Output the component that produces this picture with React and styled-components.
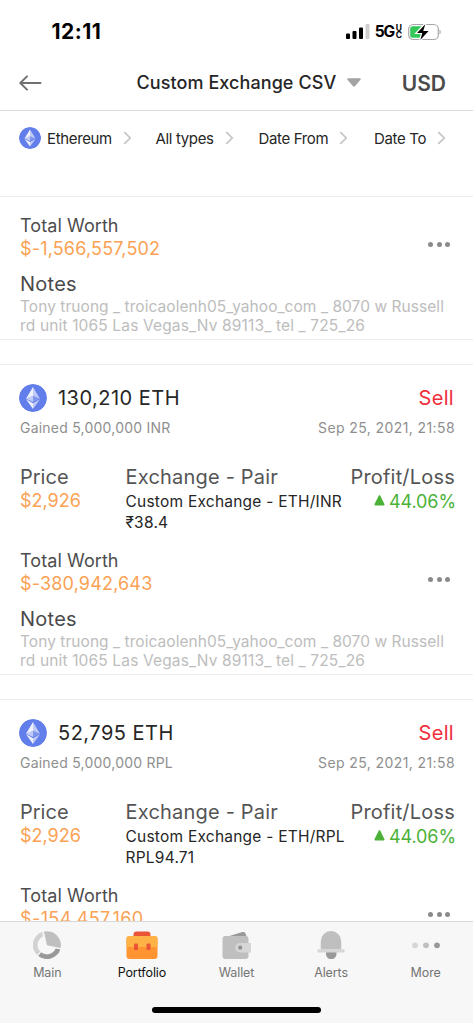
import React from "react";
import styled, { createGlobalStyle } from "styled-components";

const NOTE = "Tony truong _ troicaolenh05_yahoo_com _ 8070 w Russell rd unit 1065 Las Vegas_Nv 89113_ tel _ 725_26"

const filters = [
    { id: 1, name: "Ethereum", icon: true, width: 136.5 },
    { id: 2, name: "All types", width: 103 },
    { id: 3, name: "Date From", width: 115.5 },
    { id: 4, name: "Date To", width: 80 },
]

const trades = [
    { id: 1, amount: "130,210 ETH", gained: "Gained 5,000,000 INR", pair: "Custom Exchange - ETH/INR", rate: "₹38.4", worth: "$-380,942,643" },
    { id: 2, amount: "52,795 ETH", gained: "Gained 5,000,000 RPL", pair: "Custom Exchange - ETH/RPL", rate: "RPL94.71", worth: "$-154,457,160", spacing: 0.4 },
]

export default function App() {
    return (<Screen>
        <GlobalStyle />
        <StatusBar />
        <Header>
            <BackArrow />
            <Title>Custom Exchange CSV</Title>
            <Caret width="14" height="9" viewBox="0 0 14 9"><path d="M1.2.3h11.600c.9 0 1.200.8.7 1.400L8.200 7.900c-.7.8-1.700.8-2.400 0L.5 1.700C0 1.100.3.3 1.200.3z" fill="#a3a3a3" /></Caret>
            <Currency>USD</Currency>
        </Header>
        <Filters>
            {filters.map((f) => <Filter key={f.id} $width={f.width}>
                {f.icon && <EthIcon size={22} />}
                <FilterName $icon={f.icon}>{f.name}</FilterName>
                <Chevron />
            </Filter>)}
        </Filters>
        <List>
            <Card $cut>
                <Worth value="$-1,566,557,502" />
                <Notes />
            </Card>
            {trades.map((t) => <Trade key={t.id} {...t} />)}
        </List>
        <TabBar />
    </Screen>)
}

function StatusBar() {
    return (<StyleStatus>
        <Clock>12:11</Clock>
        <Signals>
            <svg width="24" height="16" viewBox="0 0 24 16">
                <rect x="0" y="9.500" width="4" height="5.500" rx="1" fill="#000" />
                <rect x="6.500" y="7" width="4" height="8" rx="1" fill="#000" />
                <rect x="13" y="3.500" width="4" height="11.500" rx="1" fill="#000" />
                <rect x="19.500" y="0" width="4" height="15" rx="1" fill="#cfcfcf" />
            </svg>
            <Network>5G</Network>
            <Stack><span>U</span><span>C</span></Stack>
            <svg width="34" height="18" viewBox="0 0 34 18">
                <rect x="0.700" y="1.500" width="29.600" height="15" rx="4.600" fill="#fff" stroke="#a8a8a8" strokeWidth="1.200" />
                <path d="M4.700 3.200H14v11.600H4.700a2.500 2.500 0 0 1-2.500-2.500V5.700a2.500 2.500 0 0 1 2.500-2.500z" fill="#34c759" />
                <path d="M31.500 6.500c1.600.7 1.600 4.300 0 5z" fill="#a8a8a8" />
                <path d="M17.300 1.200L9 9.900h5.300l-2 7L20.600 8h-5.400z" fill="#000" stroke="#fff" strokeWidth="2.400" />
                <path d="M17.300 1.200L9 9.900h5.300l-2 7L20.600 8h-5.400z" fill="#000" />
            </svg>
        </Signals>
    </StyleStatus>)
}

function BackArrow() {
    return (<svg width="23" height="16" viewBox="0 0 23 16" fill="none" stroke="#707070" strokeWidth="1.900" strokeLinecap="round" strokeLinejoin="round">
        <path d="M21.500 8H1.500M8 1.300L1.300 8 8 14.700" />
    </svg>)
}

function Chevron() {
    return (<svg width="9" height="14" viewBox="0 0 9 14" fill="none" stroke="#c4c4c4" strokeWidth="1.700">
        <path d="M1.300 1.200L7.200 7l-5.900 5.800" />
    </svg>)
}

function EthIcon({ size }) {
    return (<Coin width={size} height={size} viewBox="0 0 32 32">
        <circle cx="16" cy="16" r="16" fill="#627eea" />
        <path d="M16 3.500v9.900l8 3.500z" fill="#fff" fillOpacity=".6" />
        <path d="M16 3.500l-8 13.400 8-3.500z" fill="#fff" fillOpacity=".9" />
        <path d="M16 21.900v6.600l8-11.100z" fill="#fff" fillOpacity=".6" />
        <path d="M16 28.500v-6.600l-8-4.500z" fill="#fff" fillOpacity=".9" />
        <path d="M16 20.500l8-3.600-8-3.500z" fill="#fff" fillOpacity=".2" />
        <path d="M8 16.900l8 3.600v-7.100z" fill="#fff" fillOpacity=".6" />
    </Coin>)
}

function Worth({ value, spacing }) {
    return (<WorthRow>
        <div>
            <WorthLabel>Total Worth</WorthLabel>
            <Money $spacing={spacing}>{value}</Money>
        </div>
        <Dots><i /><i /><i /></Dots>
    </WorthRow>)
}

function Notes() {
    return (<>
        <NotesLabel>Notes</NotesLabel>
        <NotesText>{NOTE}</NotesText>
    </>)
}

function Trade({ amount, gained, pair, rate, worth, spacing }) {
    return (<Card>
        <TopRow>
            <EthIcon size={28} />
            <Amount>{amount}</Amount>
            <Sell>Sell</Sell>
        </TopRow>
        <SubRow>
            <Gained>{gained}</Gained>
            <span>Sep 25, 2021, 21:58</span>
        </SubRow>
        <Columns>
            <div>
                <Label $spacing={0}>Price</Label>
                <Money $spacing={0}>$2,926</Money>
            </div>
            <div>
                <Label>Exchange - Pair</Label>
                <Pair>{pair}<br />{rate}</Pair>
            </div>
            <Right>
                <Label>Profit/Loss</Label>
                <Profit>
                    <Triangle width="11" height="11" viewBox="0 0 11 11"><path d="M4.700.8c.3-.6 1.300-.6 1.600 0l4.100 8.300c.3.7 0 1.400-.8 1.400H1.400c-.8 0-1.100-.7-.8-1.400z" fill="#4bb237" /></Triangle>
                    <span>44.06%</span>
                </Profit>
            </Right>
        </Columns>
        <Worth value={worth} spacing={spacing} />
        <Notes />
    </Card>)
}

function TabBar() {
    return (<StyleTabs>
        <Tabs>
            <Tab>
                <svg width="28" height="28" viewBox="0 0 28 28">
                    <path d="M10.900.5A14 14 0 0 1 27.600 17L14 14.200z" fill="#bfbfbf" />
                    <path d="M9.300.8A14 14 0 0 0 4 24l3.300-3.500A9.300 9.300 0 0 1 10 5.500z" fill="#d2d2d2" />
                    <path d="M27.300 18.400A14 14 0 0 1 5.200 25l3-3.800a9.300 9.300 0 0 0 14.400-3.800z" fill="#999" />
                </svg>
                <TabName>Main</TabName>
            </Tab>
            <Tab>
                <svg width="32" height="28" viewBox="0 0 32 28">
                    <path d="M7.500 6V3.500A3 3 0 0 1 10.500.5h11a3 3 0 0 1 3 3V6z" fill="#ea5437" />
                    <rect x="0.500" y="5" width="31" height="23" rx="3" fill="#ff9431" />
                    <path d="M.5 16V8a3 3 0 0 1 3-3h25a3 3 0 0 1 3 3v8z" fill="#ffb347" />
                    <rect x="8" y="12.500" width="4" height="6.500" rx=".8" fill="#ea5437" />
                    <rect x="20.500" y="12.500" width="4" height="6.500" rx=".8" fill="#ea5437" />
                </svg>
                <TabName $active>Portfolio</TabName>
            </Tab>
            <Tab>
                <svg width="30" height="28" viewBox="0 0 30 28">
                    <path d="M3.500 6.500L20.500 1.200c2-.6 3.500-.2 4.200 1.700L26 7z" fill="#999" />
                    <rect x="1.500" y="5" width="26" height="23" rx="3" fill="#bfbfbf" />
                    <path d="M19 12H30v9.500H19a4.700 4.700 0 0 1 0-9.500z" fill="#d6d6d6" />
                    <circle cx="19.200" cy="16.700" r="2.100" fill="#919191" />
                </svg>
                <TabName>Wallet</TabName>
            </Tab>
            <Tab>
                <svg width="28" height="28" viewBox="0 0 28 28">
                    <path d="M9 20.500h10.500V23a5.200 5.200 0 0 1-10.500 0z" fill="#999" />
                    <path d="M3.800 18.500V10.300a10.200 10.200 0 0 1 20.400 0v8.200z" fill="#bfbfbf" />
                    <rect x="0.500" y="18.300" width="27" height="3.200" fill="#d6d6d6" />
                </svg>
                <TabName>Alerts</TabName>
            </Tab>
            <Tab>
                <svg width="30" height="28" viewBox="0 0 30 28">
                    <circle cx="4" cy="14.300" r="2.900" fill="#d6d6d6" />
                    <circle cx="15" cy="14.300" r="2.900" fill="#bfbfbf" />
                    <circle cx="26" cy="14.300" r="2.900" fill="#999" />
                </svg>
                <TabName>More</TabName>
            </Tab>
        </Tabs>
        <HomeBar />
    </StyleTabs>)
}

const GlobalStyle = createGlobalStyle`
*{
    box-sizing:border-box;
}
body{
    margin:0;
    background-color:#fff;
    font-family:Inter, "Liberation Sans", sans-serif;
}
svg{
    display:block;
    flex-shrink:0;
}
`
const Screen = styled.main`
width:473px;
height:1023px;
display:flex;
flex-direction:column;
overflow:hidden;
background-color:#fff;
`
const StyleStatus = styled.div`
height:56px;
flex-shrink:0;
display:flex;
justify-content:space-between;
padding:20px 31px 0 51.5px;
`
const Clock = styled.span`
height:23px;
line-height:23px;
font-size:21px;
font-weight:700;
letter-spacing:0.5px;
color:#000;
`
const Signals = styled.div`
height:23px;
display:flex;
align-items:center;
`
const Network = styled.span`
margin-left:5px;
font-size:15.5px;
font-weight:700;
letter-spacing:-1px;
`
const Stack = styled.span`
display:flex;
flex-direction:column;
margin:0 6px 0 1.5px;
font-size:8.5px;
line-height:7px;
font-weight:700;
`
const Header = styled.header`
height:55px;
flex-shrink:0;
display:flex;
align-items:center;
padding:0 27px 0 19px;
border-bottom:1px solid #d9d9d9;
`
const Title = styled.h1`
margin:0 0 0 94.5px;
padding-bottom:1px;
font-size:18px;
font-weight:500;
letter-spacing:0.08px;
color:#262626;
white-space:nowrap;
`
const Caret = styled.svg`
margin:0 0 2px 11px;
`
const Currency = styled.span`
margin-left:auto;
padding-top:1px;
font-size:21px;
font-weight:600;
color:#4a4a4a;
`
const Filters = styled.nav`
height:85px;
flex-shrink:0;
display:flex;
align-items:flex-start;
padding:16px 0 0 19px;
`
const Filter = styled.div`
width:${(props) => props.$width}px;
height:22px;
display:flex;
align-items:center;
`
const FilterName = styled.span`
margin-left:${(props) => props.$icon ? "6px" : "0"};
margin-right:11px;
font-size:15px;
letter-spacing:-0.35px;
color:#262626;
white-space:nowrap;
`
const Coin = styled.svg`
border-radius:50%;
`
const List = styled.section`
flex:1;
min-height:0;
overflow:hidden;
`
const Card = styled.article`
height:${(props) => props.$cut ? "144px" : "311px"};
margin-bottom:24px;
padding:${(props) => props.$cut ? "1px" : "15px"} 19px 0 20px;
border-top:1px solid #ececec;
border-bottom:1px solid #ececec;
`
const TopRow = styled.div`
height:35px;
margin-left:-1.5px;
display:flex;
align-items:center;
`
const Amount = styled.span`
margin-left:11.5px;
font-size:20px;
letter-spacing:0.48px;
color:#262626;
`
const Sell = styled.span`
margin-left:auto;
font-size:20px;
letter-spacing:0.3px;
color:#f02f3c;
`
const SubRow = styled.div`
height:24px;
margin-right:-1px;
display:flex;
justify-content:space-between;
align-items:center;
font-size:14px;
letter-spacing:0.4px;
color:#8f8f8f;
`
const Gained = styled.span`
letter-spacing:0.22px;
`
const Columns = styled.div`
display:grid;
grid-template-columns:105.5px 1fr auto;
height:68px;
margin-top:26px;
margin-right:-1px;
`
const Right = styled.div`
text-align:right;
`
const Label = styled.h4`
margin:0;
height:24px;
line-height:24px;
font-size:20px;
font-weight:400;
letter-spacing:${(props) => props.$spacing ?? 0.2}px;
color:#555;
white-space:nowrap;
`
const Money = styled.p`
margin:0;
height:24px;
line-height:24px;
font-size:18px;
letter-spacing:${(props) => props.$spacing ?? 0.17}px;
color:#fba254;
`
const Pair = styled.p`
margin:2px -20px 0 0;
font-size:15.5px;
line-height:21px;
letter-spacing:0.23px;
color:#262626;
white-space:nowrap;
`
const Profit = styled.div`
height:24px;
margin-right:-1px;
display:flex;
align-items:center;
justify-content:flex-end;
gap:4px;
font-size:18px;
letter-spacing:-0.1px;
color:#4bb237;
`
const Triangle = styled.svg`
margin-bottom:2px;
`
const WorthRow = styled.div`
display:flex;
justify-content:space-between;
margin-top:15px;
height:59px;
`
const WorthLabel = styled.h4`
margin:0;
height:24px;
line-height:25px;
font-size:18px;
font-weight:400;
letter-spacing:0.08px;
color:#4d4d4d;
`
const Dots = styled.div`
display:flex;
gap:3.5px;
padding:29px 4px 0 0;
i{
    width:5px;
    height:5px;
    border-radius:50%;
    background-color:#8a8a8a;
}
`
const NotesLabel = styled.h4`
margin:0;
height:24px;
line-height:24px;
font-size:20px;
font-weight:400;
letter-spacing:0.25px;
color:#4a4a4a;
`
const NotesText = styled.p`
margin:2px 0 0;
width:436px;
font-size:15.5px;
line-height:18.5px;
letter-spacing:0.15px;
color:#bdbdbd;
&::first-line{
    letter-spacing:0.05px;
}
`
const StyleTabs = styled.footer`
height:102px;
flex-shrink:0;
display:flex;
flex-direction:column;
align-items:center;
background-color:#f7f7f7;
border-top:1px solid #d9d9d9;
`
const Tabs = styled.div`
width:473px;
height:85px;
display:flex;
padding-top:9px;
`
const Tab = styled.div`
flex:1;
display:flex;
flex-direction:column;
align-items:center;
`
const TabName = styled.span`
margin-top:5px;
font-size:12.5px;
line-height:18px;
letter-spacing:-0.1px;
color:${(props) => props.$active ? "#111" : "#757575"};
`
const HomeBar = styled.div`
width:169px;
height:6px;
border-radius:3px;
background-color:#000;
`
